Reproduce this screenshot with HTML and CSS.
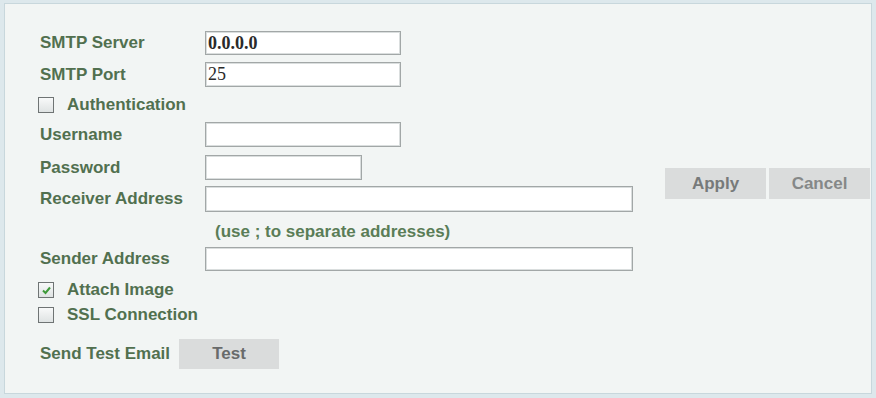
FILE: index.html
```html
<!DOCTYPE html>
<html lang="en">
<head>
    <meta charset="UTF-8">
    <meta name="viewport" content="width=device-width, initial-scale=1.0">
    <title>Email Settings</title>
    <link rel="stylesheet" href="styles.css">
</head>
<body>
    <div class="page">
        <section class="panel">
            <form class="form" action="">
                <div class="row">
                    <label class="label">SMTP Server</label>
                    <input type="text" class="field field-mid field-bold" value="0.0.0.0">
                </div>
                <div class="row mt7 tall">
                    <label class="label">SMTP Port</label>
                    <input type="text" class="field field-mid" value="25">
                </div>
                <div class="row check-row mt6">
                    <span class="box"></span>
                    <span class="label">Authentication</span>
                </div>
                <div class="row mt5 tall">
                    <label class="label">Username</label>
                    <input type="text" class="field field-mid">
                </div>
                <div class="row mt8 tall">
                    <label class="label">Password</label>
                    <input type="password" class="field field-short">
                </div>
                <div class="row mt6 taller">
                    <label class="label">Receiver Address</label>
                    <input type="text" class="field field-long">
                </div>
                <div class="row note mt10">(use ; to separate addresses)</div>
                <div class="row mt5">
                    <label class="label">Sender Address</label>
                    <input type="text" class="field field-long">
                </div>
                <div class="row check-row small mt9">
                    <span class="box checked">
                        <svg width="11" height="11" viewBox="0 0 11 11"><path d="M2 5.5 L4.5 8 L9 2.5" fill="none" stroke="#3f9a3a" stroke-width="2"/></svg>
                    </span>
                    <span class="label">Attach Image</span>
                </div>
                <div class="row check-row small mt5">
                    <span class="box"></span>
                    <span class="label">SSL Connection</span>
                </div>
                <div class="row test-row mt14">
                    <span class="label">Send Test Email</span>
                    <button type="button" class="btn btn-test">Test</button>
                </div>
            </form>
            <div class="actions">
                <button type="button" class="btn">Apply</button>
                <button type="button" class="btn btn-cancel">Cancel</button>
            </div>
        </section>
    </div>
</body>
</html>
```

FILE: styles.css
```css
body{
    margin: 0;
    background: #dde8ec;
    font-family: "Liberation Sans", Arial, sans-serif;
}
.page{
    width: 876px;
    height: 398px;
    padding: 3px 4px 4px 4px;
    box-sizing: border-box;
}
.panel{
    height: 100%;
    box-sizing: border-box;
    background: #f2f5f4;
    border: 1px solid #c8d7dc;
    display: flex;
    justify-content: space-between;
    align-items: flex-start;
}
.form{
    display: flex;
    flex-direction: column;
    padding: 27px 0 0 35px;
}
.row{
    display: flex;
    align-items: center;
    height: 24px;
}
.row.tall{ height: 25px; }
.row.taller{ height: 26px; }
.row.small{ height: 20px; }
.mt5{ margin-top: 5px; }
.mt6{ margin-top: 6px; }
.mt7{ margin-top: 7px; }
.mt8{ margin-top: 8px; }
.mt9{ margin-top: 9px; }
.mt10{ margin-top: 10px; }
.mt14{ margin-top: 14px; }

.label{
    width: 165px;
    flex: none;
    font-size: 17px;
    font-weight: bold;
    color: #51704f;
    white-space: nowrap;
}
.field{
    height: 100%;
    box-sizing: border-box;
    border: 1px solid #a2a7a7;
    box-shadow: inset 0 0 0 1px #dadede;
    background: #fff;
    padding: 0 2px;
    font-family: "Liberation Serif", "Times New Roman", serif;
    font-size: 18px;
    color: #2a2a2a;
    outline: 0;
}
.field-bold{ font-weight: bold; }
.field-mid{ width: 196px; }
.field-short{ width: 157px; }
.field-long{ width: 428px; }

.note{
    height: 20px;
    padding-left: 175px;
    font-size: 17px;
    font-weight: bold;
    color: #5a7d57;
}

.check-row .box{
    width: 16px;
    height: 16px;
    box-sizing: border-box;
    margin-left: -2px;
    margin-right: 13px;
    border: 1px solid #6f7474;
    background: linear-gradient(#f8f9f9, #dfe3e3);
    display: flex;
    align-items: center;
    justify-content: center;
}
.check-row .label{ width: auto; }

.btn{
    border: 0;
    background: #dadcdc;
    font-family: "Liberation Sans", Arial, sans-serif;
    font-size: 17px;
    font-weight: bold;
    color: #777a7a;
    width: 101px;
    height: 31px;
    padding: 0;
}
.btn-cancel{
    color: #858888;
    margin-left: 3px;
}
.test-row{ height: 30px; }
.test-row .label{ width: auto; margin-right: 9px; }
.btn-test{
    width: 100px;
    height: 30px;
    color: #686b6b;
}
.actions{
    display: flex;
    margin-top: 164px;
    margin-right: 1px;
}
```
